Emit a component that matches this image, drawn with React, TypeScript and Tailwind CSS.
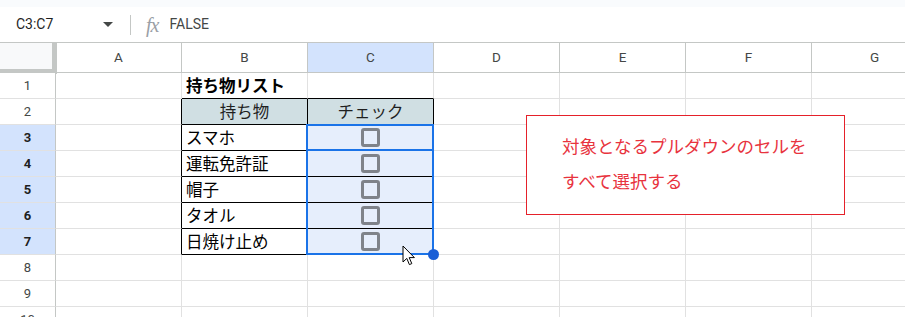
import React from "react";

const COLS = ["A", "B", "C", "D", "E", "F", "G"];
const ITEMS = ["スマホ", "運転免許証", "帽子", "タオル", "日焼け止め"];
const JP = "font-['Noto_Sans_CJK_JP','Noto_Sans',sans-serif]";

function CheckBox() {
  return (
    <div className="w-[19px] h-[19px] rounded-[3px] border-[3px] border-[#7f838a] bg-transparent" />
  );
}

function DataCell({ r, c }: { r: number; c: number }) {
  let br = "border-r-[#e1e1e1]";
  let bb = "border-b-[#e1e1e1]";
  let bg = "bg-white";
  let content: React.ReactNode = null;
  let align = "justify-start";

  if (c === 0 && r >= 2 && r <= 7) br = "border-r-black";
  if ((c === 1 || c === 2) && r === 1) bb = "border-b-black";
  if ((c === 1 || c === 2) && r >= 2 && r <= 7) {
    br = "border-r-black";
    bb = "border-b-black";
  }
  if ((c === 1 || c === 2) && r === 2) bg = "bg-[#d0dfe3]";
  if (c === 2 && r >= 3 && r <= 7) bg = "bg-[#e6eefc]";

  if (c === 1 && r === 1) {
    content = <span className="font-bold text-[16.5px] text-black pl-[4px]">持ち物リスト</span>;
  } else if (c === 1 && r === 2) {
    content = <span className="text-[16.5px] text-[#1f1f1f]">持ち物</span>;
    align = "justify-center";
  } else if (c === 2 && r === 2) {
    content = <span className="text-[16.5px] text-[#1f1f1f]">チェック</span>;
    align = "justify-center";
  } else if (c === 1 && r >= 3 && r <= 7) {
    content = <span className="text-[16.5px] text-black pl-[4px]">{ITEMS[r - 3]}</span>;
  } else if (c === 2 && r >= 3 && r <= 7) {
    content = <CheckBox />;
    align = "justify-center";
  }

  return (
    <div
      className={`w-[126px] h-[26px] shrink-0 border-r border-b ${br} ${bb} ${bg} flex items-center ${align} leading-none ${JP}`}
    >
      {content}
    </div>
  );
}

export default function App() {
  return (
    <div className="w-[905px] h-[317px] overflow-hidden bg-white font-['Roboto','Liberation_Sans',sans-serif]">
      <div className="h-[7px] bg-[#f9fbfd]" />
      {/* formula bar */}
      <div className="h-[36px] flex items-center border-b border-[#c4c7c5] bg-white">
        <div className="w-[130px] flex items-center pl-[16px] pr-[17px]">
          <span className="text-[14px] text-[#1f1f1f] flex-1">C3:C7</span>
          <svg width="10" height="5" viewBox="0 0 10 5">
            <path d="M0 0 L10 0 L5 5 Z" fill="#444746" />
          </svg>
        </div>
        <div className="w-px h-[20px] bg-[#c4c7c5]" />
        <span className="ml-[15px] text-[20px] leading-none italic text-[#9aa0a6] font-['Liberation_Serif',serif] tracking-[-1px]">fx</span>
        <span className="ml-[11px] text-[14px] text-[#444746]">FALSE</span>
      </div>

      {/* grid */}
      <div className="relative">
        {/* header row */}
        <div className="flex h-[30px]">
          <div className="w-[56px] h-[30px] shrink-0 bg-[#f8f9fa] border-r-[4px] border-b-[4px] border-[#c4c7c5] box-border relative">
            <div className="absolute right-[-5px] top-0 bottom-[-5px] w-px bg-[#c4c7c5]" />
          </div>
          {COLS.map((col, i) => (
            <div
              key={col}
              className={`w-[126px] h-[30px] shrink-0 border-r border-b border-[#c4c7c5] flex items-center justify-center text-[13.5px] text-[#444746] ${i === 2 ? "bg-[#d3e3fd] text-[#0b57d0]" : "bg-white"}`}
            >
              {col}
            </div>
          ))}
        </div>
        {Array.from({ length: 10 }, (_, ri) => {
          const r = ri + 1;
          const sel = r >= 3 && r <= 7;
          return (
            <div key={r} className="flex">
              <div
                className={`w-[56px] h-[26px] shrink-0 border-r border-b border-r-[#c4c7c5] border-b-[#e1e1e1] flex items-center justify-center text-[13px] ${sel ? "bg-[#d3e3fd] font-bold text-[#1f1f1f]" : "bg-white text-[#444746]"}`}
              >
                {r}
              </div>
              {COLS.map((_, c) => (
                <DataCell key={c} r={r} c={c} />
              ))}
            </div>
          );
        })}

        {/* selection range */}
        <div className="absolute left-[306px] top-[81px] w-[128px] h-[131px] border-2 border-[#1a73e8] pointer-events-none" />
        {/* active cell */}
        <div className="absolute left-[306px] top-[81px] w-[128px] h-[27px] border-2 border-[#1a73e8] pointer-events-none" />
        {/* fill handle */}
        <div className="absolute left-[428px] top-[206px] w-[11px] h-[11px] rounded-full bg-[#1a5fd6]" />
        {/* mouse cursor */}
        <svg className="absolute left-[402px] top-[202px]" width="14" height="22" viewBox="0 0 14 22">
          <path
            d="M1 1 L1 17 L4.8 13.4 L7.4 19.6 L9.8 18.6 L7.2 12.6 L12.4 12.6 Z"
            fill="white"
            stroke="black"
            strokeWidth="1"
            strokeLinejoin="round"
          />
        </svg>

        {/* callout */}
        <div className="absolute left-[526px] top-[72px] w-[319px] h-[100px] border border-[#e5212a] bg-white pl-[35px] pt-[12px]">
          <div className={`text-[17.5px] leading-[35px] text-[#e8333e] ${JP}`}>
            対象となるプルダウンのセルを
            <br />
            すべて選択する
          </div>
        </div>
      </div>
    </div>
  );
}
